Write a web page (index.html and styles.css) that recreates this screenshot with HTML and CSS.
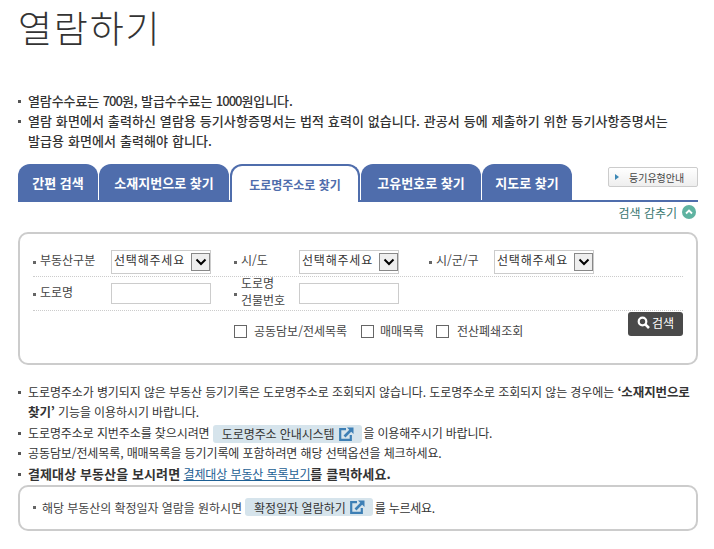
FILE: index.html
```html
<!DOCTYPE html>
<html lang="ko">
<head>
  <meta charset="UTF-8">
  <meta name="viewport" content="width=device-width, initial-scale=1.0">
  <title>열람하기</title>
  <link rel="stylesheet" href="styles.css">
</head>
<body>

  <h1 class="page-title">열람하기</h1>

  <!-- Fee notice -->
  <ul class="notice">
    <li>열람수수료는 <span class="num">700</span>원, 발급수수료는 <span class="num">1000</span>원입니다.</li>
    <li class="notice-long">열람 화면에서 출력하신 열람용 등기사항증명서는 법적 효력이 없습니다. 관공서 등에 제출하기 위한 등기사항증명서는<br>발급용 화면에서 출력해야 합니다.</li>
  </ul>

  <!-- Tabs -->
  <div class="tabs">
    <a href="#" class="tab tab-1">간편 검색</a>
    <a href="#" class="tab tab-2">소재지번으로 찾기</a>
    <a href="#" class="tab tab-3 active">도로명주소로 찾기</a>
    <a href="#" class="tab tab-4">고유번호로 찾기</a>
    <a href="#" class="tab tab-5">지도로 찾기</a>
    <a href="#" class="guide-btn"><span class="guide-arrow"></span>등기유형안내</a>
  </div>

  <div class="toggle-row">
    검색 감추기
    <span class="toggle-icon">
      <svg width="8" height="6" viewBox="0 0 8 6"><path d="M1 4.5 L4 1.5 L7 4.5" fill="none" stroke="#fff" stroke-width="1.8"/></svg>
    </span>
  </div>

  <!-- Search form -->
  <div class="search-box">
    <div class="form-row row-top">
      <div class="cell cell-1">
        <label class="field-label">부동산구분</label>
        <div class="select-box"><span>선택해주세요</span><i class="select-arrow"><svg width="12" height="8" viewBox="0 0 12 8"><path d="M1.5 1.5 L6 6 L10.5 1.5" fill="none" stroke="#000" stroke-width="2"/></svg></i></div>
      </div>
      <div class="cell cell-2">
        <label class="field-label">시/도</label>
        <div class="select-box"><span>선택해주세요</span><i class="select-arrow"><svg width="12" height="8" viewBox="0 0 12 8"><path d="M1.5 1.5 L6 6 L10.5 1.5" fill="none" stroke="#000" stroke-width="2"/></svg></i></div>
      </div>
      <div class="cell cell-3">
        <label class="field-label">시/군/구</label>
        <div class="select-box"><span>선택해주세요</span><i class="select-arrow"><svg width="12" height="8" viewBox="0 0 12 8"><path d="M1.5 1.5 L6 6 L10.5 1.5" fill="none" stroke="#000" stroke-width="2"/></svg></i></div>
      </div>
    </div>
    <div class="form-row row-mid">
      <div class="cell cell-1">
        <label class="field-label">도로명</label>
        <input type="text" class="text-box">
      </div>
      <div class="cell cell-2">
        <label class="field-label two-line">도로명<br>건물번호</label>
        <input type="text" class="text-box">
      </div>
    </div>
    <div class="form-row row-bottom">
      <div class="checks">
        <label class="check check-1"><i class="check-box"></i><span>공동담보/전세목록</span></label>
        <label class="check check-2"><i class="check-box"></i><span>매매목록</span></label>
        <label class="check check-3"><i class="check-box"></i><span>전산폐쇄조회</span></label>
      </div>
      <a href="#" class="search-btn">
        <svg width="13" height="13" viewBox="0 0 13 13"><circle cx="5.5" cy="5.5" r="3.8" fill="none" stroke="#fff" stroke-width="2.2"/><path d="M8.3 8.3 L12 12" stroke="#fff" stroke-width="2.6"/></svg>
        검색
      </a>
    </div>
  </div>

  <!-- Help text -->
  <ul class="help">
    <li>도로명주소가 병기되지 않은 부동산 등기기록은 도로명주소로 조회되지 않습니다. 도로명주소로 조회되지 않는 경우에는 <b>‘소재지번으로</b> <b>찾기’</b> 기능을 이용하시기 바랍니다.</li>
    <li>도로명주소로 지번주소를 찾으시려면 <a href="#" class="link-chip">도로명주소 안내시스템 <svg width="15" height="14" viewBox="0 0 15 14"><path d="M7 2.2 H1.2 V12.8 H11.8 V8" fill="none" stroke="#3d7fb5" stroke-width="2.2"/><path d="M5.5 9.5 L12 3" fill="none" stroke="#3d7fb5" stroke-width="2.6"/><path d="M8 0.5 H14.5 V7 Z" fill="#3d7fb5"/></svg></a><span class="after-chip">을 이용해주시기 바랍니다.</span></li>
    <li>공동담보/전세목록, 매매목록을 등기기록에 포함하려면 해당 선택옵션을 체크하세요.</li>
    <li class="pay-line"><b>결제대상 부동산을 보시려면</b> <a href="#" class="plain-link">결제대상 부동산 목록보기</a><b>를 클릭하세요.</b></li>
  </ul>

  <div class="confirm-box">
    <span class="field-label">해당 부동산의 확정일자 열람을 원하시면</span>
    <a href="#" class="link-chip">확정일자 열람하기 <svg width="15" height="14" viewBox="0 0 15 14"><path d="M7 2.2 H1.2 V12.8 H11.8 V8" fill="none" stroke="#3d7fb5" stroke-width="2.2"/><path d="M5.5 9.5 L12 3" fill="none" stroke="#3d7fb5" stroke-width="2.6"/><path d="M8 0.5 H14.5 V7 Z" fill="#3d7fb5"/></svg></a>
    <span class="confirm-tail">를 누르세요.</span>
  </div>

</body>
</html>
```

FILE: styles.css
```css
* {
  margin: 0;
  padding: 0;
  box-sizing: border-box;
}

body {
  font-family: "Noto Sans CJK KR", sans-serif;
  font-size: 12px;
  color: #333;
  background: white;
  padding: 0 16px 0 18px;
  overflow: hidden;
  height: 549px;
}

ul {
  list-style: none;
}

a {
  text-decoration: none;
  color: inherit;
}

.page-title {
  font-size: 37px;
  font-weight: 300;
  letter-spacing: 1.8px;
  line-height: 54px;
  height: 91px;
  color: #333;
}

/* notice */
.notice {
  font-size: 13px;
  font-weight: 500;
  line-height: 20px;
  height: 73px;
  letter-spacing: -0.1px;
}

.notice-long {
  letter-spacing: 0.1px;
}

.num {
  letter-spacing: -1px;
}

.notice li,
.help li {
  padding-left: 10px;
  position: relative;
}

.notice li::before,
.help li::before {
  content: "";
  position: absolute;
  left: 0;
  top: 9px;
  width: 3px;
  height: 3px;
  background: #555;
}

/* tabs */
.tabs {
  display: flex;
  height: 38px;
  border-bottom: 2px solid #4f6dac;
  position: relative;
}

.tab {
  height: 36px;
  background: #4f6dac;
  color: white;
  font-weight: 700;
  font-size: 13px;
  border-radius: 12px 12px 0 0;
  display: flex;
  align-items: center;
  justify-content: center;
  margin-right: 1px;
}

.tab-1 { width: 80px; }
.tab-2 { width: 130px; }
.tab-3 { width: 130px; }
.tab-4 { width: 120px; }
.tab-5 { width: 90px; }

.tab.active {
  background: white;
  color: #4f6dac;
  font-size: 12px;
  border: 2px solid #4f6dac;
  border-bottom: none;
  height: 38px;
}

.guide-btn {
  position: absolute;
  right: 0;
  top: 3px;
  width: 90px;
  height: 20px;
  border: 1px solid #ccc;
  border-radius: 2px;
  background: linear-gradient(#fff, #eee);
  font-size: 10px;
  color: #444;
  display: flex;
  align-items: center;
  padding-left: 20px;
}

.guide-arrow {
  position: absolute;
  left: 6px;
  top: 6px;
  border-left: 4px solid #3d88b5;
  border-top: 3px solid transparent;
  border-bottom: 3px solid transparent;
}

.toggle-row {
  height: 20px;
  margin-bottom: 10px;
  display: flex;
  align-items: center;
  justify-content: flex-end;
  gap: 5px;
  color: #38766f;
  padding-right: 2px;
}

.toggle-icon {
  width: 14px;
  height: 14px;
  border-radius: 50%;
  background: #5fb3a1;
  display: flex;
  align-items: center;
  justify-content: center;
}

/* search form */
.search-box {
  height: 133px;
  border: 2px solid #ccc;
  border-radius: 10px;
  padding: 16px 13px 0 13px;
  margin-bottom: 17px;
}

.form-row {
  display: flex;
  align-items: center;
  border-bottom: 1px dotted #ccc;
}

.row-top { height: 27px; padding-bottom: 3px; }
.row-mid { height: 34px; }

.row-bottom {
  border-bottom: none;
  align-items: flex-start;
  justify-content: space-between;
  position: relative;
}

.cell {
  display: flex;
  align-items: center;
}

.cell-1 { width: 201px; }
.cell-2 { width: 195px; }

.field-label {
  color: #444;
  position: relative;
  padding-left: 7px;
}

.field-label::before {
  content: "";
  position: absolute;
  left: 0;
  top: 50%;
  width: 3px;
  height: 3px;
  margin-top: -1px;
  background: #666;
}

.cell .field-label {
  padding-bottom: 5px;
}

.cell-1 .field-label { width: 78px; }
.cell-2 .field-label { width: 65px; }
.cell-3 .field-label { width: 65px; }

.two-line {
  line-height: 17px;
}

.select-box {
  width: 100px;
  height: 24px;
  border: 1px solid #ccc;
  display: flex;
  align-items: center;
  justify-content: space-between;
  padding: 0 0 0 2px;
  color: #333;
  letter-spacing: 0.8px;
}

.select-box span {
  padding-bottom: 4px;
}

.select-arrow {
  width: 19px;
  height: 18px;
  border: 1px solid #888;
  background: #eee;
  display: flex;
  align-items: center;
  justify-content: center;
}

.text-box {
  width: 100px;
  height: 21px;
  border: 1px solid #ccc;
}

.checks {
  position: relative;
  flex: 1;
  height: 40px;
}

.check {
  display: flex;
  align-items: center;
  gap: 6px;
  color: #444;
  position: absolute;
  top: 11px;
}

.check span {
  padding-bottom: 2px;
}

.check-1 { left: 201px; gap: 7px; }
.check-2 { left: 328px; }
.check-3 { left: 403px; gap: 8px; }

.check-box {
  width: 13px;
  height: 13px;
  border: 1px solid #666;
  display: block;
}

.search-btn {
  position: absolute;
  right: 0;
  top: 1px;
  width: 55px;
  height: 24px;
  background: #4a4a4a;
  color: white;
  border-radius: 3px;
  padding-bottom: 4px;
  display: flex;
  align-items: center;
  justify-content: center;
  gap: 2px;
}

/* help */
.help {
  line-height: 20.3px;
  height: 103px;
  letter-spacing: -0.1px;
}

.help li b {
  color: #333;
  font-size: 12.5px;
}

.help .pay-line b {
  font-size: 13px;
  letter-spacing: 0.1px;
}

.link-chip {
  display: inline-flex;
  align-items: center;
  gap: 4px;
  height: 18px;
  padding: 0 8px 0 9px;
  background: #d6e4ec;
  border-radius: 3px;
  vertical-align: middle;
}

.after-chip {
  margin-left: 2px;
  letter-spacing: -0.2px;
}

.plain-link {
  color: #1d5f94;
  font-weight: 400;
  text-decoration: underline;
}

.confirm-box {
  height: 46px;
  border: 2px solid #ccc;
  border-radius: 10px;
  padding-left: 13px;
  padding-bottom: 2px;
  display: flex;
  align-items: center;
  gap: 2px;
}

.confirm-box .field-label {
  padding-left: 9px;
  margin-right: 1px;
  letter-spacing: -0.05px;
}

.confirm-tail {
  letter-spacing: -0.25px;
}
```
